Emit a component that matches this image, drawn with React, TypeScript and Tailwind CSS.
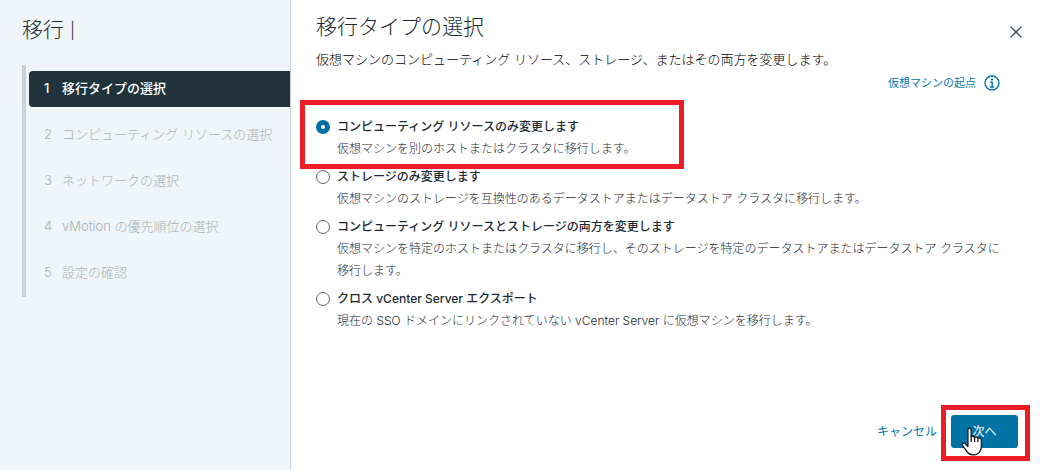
import { useState } from "react";

type Step = {
  id: number;
  label: string;
};

type MigrationOption = {
  value: string;
  title: string;
  description: string;
};

const steps: Step[] = [
  { id: 1, label: "移行タイプの選択" },
  { id: 2, label: "コンピューティング リソースの選択" },
  { id: 3, label: "ネットワークの選択" },
  { id: 4, label: "vMotion の優先順位の選択" },
  { id: 5, label: "設定の確認" },
];

const options: MigrationOption[] = [
  {
    value: "compute",
    title: "コンピューティング リソースのみ変更します",
    description: "仮想マシンを別のホストまたはクラスタに移行します。",
  },
  {
    value: "storage",
    title: "ストレージのみ変更します",
    description:
      "仮想マシンのストレージを互換性のあるデータストアまたはデータストア クラスタに移行します。",
  },
  {
    value: "both",
    title: "コンピューティング リソースとストレージの両方を変更します",
    description:
      "仮想マシンを特定のホストまたはクラスタに移行し、そのストレージを特定のデータストアまたはデータストア クラスタに移行します。",
  },
  {
    value: "cross-vcenter",
    title: "クロス vCenter Server エクスポート",
    description:
      "現在の SSO ドメインにリンクされていない vCenter Server に仮想マシンを移行します。",
  },
];

function CloseIcon() {
  return (
    <svg viewBox="0 0 12 12" className="size-3" fill="none" stroke="currentColor" strokeWidth="1.3" aria-hidden="true">
      <path d="M0.6 0.6 11.4 11.4M11.4 0.6 0.6 11.4" />
    </svg>
  );
}

function InfoIcon() {
  return (
    <svg viewBox="0 0 16 16" className="size-4" fill="none" stroke="currentColor" strokeWidth="1.4" aria-hidden="true">
      <circle cx="8" cy="8" r="7" />
      <circle cx="8" cy="4.6" r="1.1" fill="currentColor" stroke="none" />
      <path d="M6.2 7.2h2v4.6M5.9 12h4.4" />
    </svg>
  );
}

function HandCursor() {
  return (
    <svg
      viewBox="0 0 22 29"
      className="pointer-events-none absolute top-3 left-2.5 h-[29px] w-[22px]"
      aria-hidden="true"
    >
      <path
        d="M6.9 17.5V3.2C6.9 1.9 7.5 1.2 8.5 1.2s1.7.7 1.7 2v6.6c.3-.9 3.1-.8 3.4.6.5-.8 3.1-.5 3.3.9.6-.7 3.500-.3 3.500 1.900v6.300c0 4.500-3.200 8.300-7.200 8.300h-1.600c-2.600 0-4.300-1.100-5.600-3.200L1.500 18.400c-.8-1.500.8-2.800 2.200-1.900 1.200.8 2.100 1.900 3.200 3Z"
        fill="#fff"
        stroke="#1c2329"
        strokeWidth="1.4"
        strokeLinejoin="round"
      />
      <path d="M10.2 9.5v5.5M13.6 10.5v4.5M16.9 11.5v3.5" stroke="#1c2329" strokeWidth="1.4" />
    </svg>
  );
}

export default function App() {
  const [selected, setSelected] = useState("compute");

  return (
    <div className="flex min-h-screen bg-white font-['Inter','Noto_Sans_CJK_JP',sans-serif] text-[#1b2a32]">
      <aside className="w-[291px] shrink-0 border-r border-[#c9d3d8] bg-[#eff5f8] pt-4 pl-[22px]">
        <h1 className="flex items-center gap-1.5 text-[21px] leading-7 font-light">
          移行 <span className="text-base">|</span>
        </h1>
        <ol className="mt-[21px] flex flex-col gap-2.5 border-l-4 border-[#c9d2d8] pt-1.5 pb-1.5 pl-[3px] text-[13px]">
          {steps.map((step) => (
            <li key={step.id}>
              <button
                type="button"
                disabled={step.id !== 1}
                aria-current={step.id === 1 ? "step" : undefined}
                className={
                  step.id === 1
                    ? "flex h-9 w-full items-center rounded-l bg-[#20333b] pl-[15px] font-medium text-white"
                    : "flex h-9 w-full items-center pl-[15px] font-light text-[#a8b1b6]"
                }
              >
                <span className="w-[18px] text-left">{step.id}</span>
                {step.label}
              </button>
            </li>
          ))}
        </ol>
      </aside>

      <main className="flex min-w-0 flex-1 flex-col pt-[13px] pb-[22px] pl-[25px]">
        <header className="flex items-start justify-between pr-[18px]">
          <div>
            <h2 className="text-[21px] leading-7 font-light">移行タイプの選択</h2>
            <p className="mt-2 text-[13px] leading-5 font-light text-black">
              仮想マシンのコンピューティング リソース、ストレージ、またはその両方を変更します。
            </p>
          </div>
          <button type="button" aria-label="閉じる" className="mt-[13px] text-[#38474f]">
            <CloseIcon />
          </button>
        </header>

        <a href="#origin" className="mt-1 mr-10 flex items-center gap-2 self-end text-[11px] leading-5 text-[#0079ad]">
          仮想マシンの起点
          <InfoIcon />
        </a>

        <div role="radiogroup" aria-label="移行タイプの選択" className="mt-[23px] flex flex-col gap-1.5 pr-8 text-xs">
          {options.map((option) => (
            <div key={option.value} className="relative">
              <label className="flex items-center gap-[7px] leading-[22px] font-medium">
                <input
                  type="radio"
                  name="migration-type"
                  value={option.value}
                  checked={selected === option.value}
                  onChange={() => setSelected(option.value)}
                  className="size-3.5 shrink-0 appearance-none rounded-full border border-[#5c666c] bg-white checked:border-5 checked:border-[#0072a3]"
                />
                {option.title}
              </label>
              <p className="pl-[21px] leading-[22px] font-light">{option.description}</p>
              {option.value === "compute" && (
                <div className="pointer-events-none absolute -top-4 -left-4 h-[69px] w-96 border-5 border-[#ee1c25]" />
              )}
            </div>
          ))}
        </div>

        <footer className="mt-auto flex items-center justify-end gap-3.5 pr-[22px] text-xs">
          <button type="button" className="text-[#0079ad]">
            キャンセル
          </button>
          <div className="relative">
            <button type="button" className="h-[33px] w-[67px] rounded-[3px] bg-[#0072a3] text-white">
              次へ
            </button>
            <div className="pointer-events-none absolute -top-2.5 -right-3 -bottom-[13px] -left-2.5 border-5 border-[#ee1c25]" />
            <HandCursor />
          </div>
        </footer>
      </main>
    </div>
  );
}
